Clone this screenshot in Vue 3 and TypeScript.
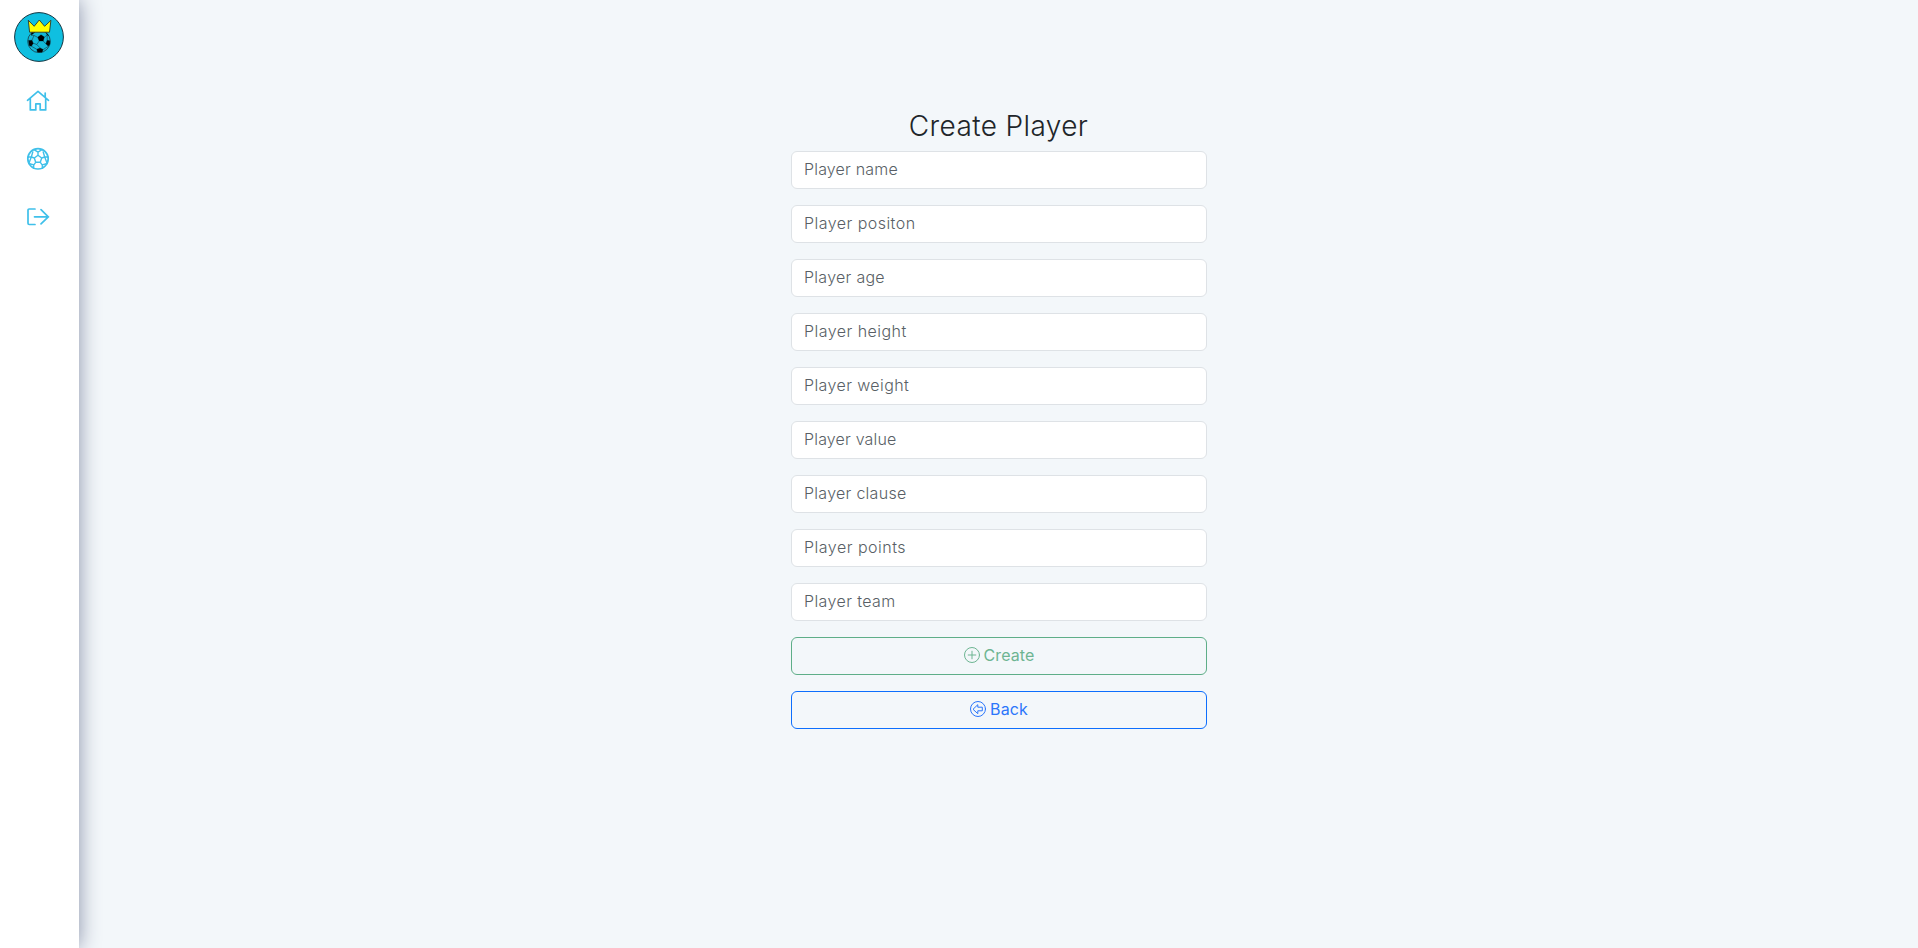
<script setup lang="ts">
interface Field { key: string; label: string }
const fields: Field[] = ['name', 'positon', 'age', 'height', 'weight', 'value', 'clause', 'points', 'team']
  .map((key) => ({ key, label: `Player ${key}` }))
</script>

<template>
  <div class="layout">
    <aside class="sidebar">
      <svg class="logo" viewBox="0 0 50 50">
        <circle cx="25" cy="25" r="24.4" fill="#0fbfe0" stroke="#153440" stroke-width="1" />
        <circle cx="25" cy="29.300" r="11.300" fill="#12b8d8" stroke="#1a3a44" stroke-width=".8" />
        <g fill="#000" stroke="#000" stroke-width=".3">
          <path d="M27 22.800l3.400 2.300-1.200 3.900h-4l-1.500-3.700z" />
          <path d="M14.500 28.500l3.500-.3 1.200 3-1.700 3.100-2.200-.6z" />
          <path d="M33.200 28.200l2.600.6.2 3.200-1.700 2.300-2.500-2.500z" />
          <path d="M22.800 37.300l3.400-1.300 3 1.600-1.200 2.700-4.600-.2z" />
          <path d="M17.500 20.800l3.500-.6-3.800 3zM32 20.800l2.700 2.700-1.500-.4z" />
        </g>
        <g fill="none" stroke="#143a44" stroke-width=".6">
          <path d="M23.700 25.300L20 23.500m5.200 5.500l-2.400 3.500-3.600-1.300m10-2.200l2.600 2.800M30.400 25.100l2.800-2M17.500 34.300l5.300 3M26.200 36l-3.400-3.500M29.200 37.600l5.100-3.300M18 28.200l2-4.700-2.800-.3M33.200 28.200v-5.100" />
        </g>
        <path d="M15.600 20.200L14.300 8.300l5.900 6L25.300 8l5.300 6.300 6.300-6-1.400 11.900z" fill="#ff0" stroke="#222" stroke-width=".8" />
      </svg>
      <nav class="nav">
        <svg viewBox="0 0 24 24" class="icon">
          <path d="M1.500 11.300L12 2.400l10.500 8.900M4.300 9.400v11.500h5.500v-6h4.400v6h5.500V9.400M19.200 4.100v4" />
        </svg>
        <svg viewBox="0 0 24 24" class="icon">
          <circle cx="12" cy="11.800" r="10.200" />
          <path class="seams" d="M12 8.300l3.700 2.700-1.400 4.300H9.700L8.300 11zM12 8.300V5.200M15.700 11l3-1M14.300 15.300l1.900 2.600M9.700 15.300l-1.900 2.600M8.300 11l-3-1M8 2.700l4 2.500 4-2.500M21.900 10l-3.200 0-1.500-5M5.300 10l-3.200 0M5.300 10l1.500-5M2.800 16.500l5 1.400-.3 3.400M5.300 10l-2.500 6.500M21.200 16.500l-5 1.400.3 3.400M18.700 10l2.500 6.500" />
        </svg>
        <svg viewBox="0 0 24 24" class="icon">
          <path d="M9 4H3.200Q2 4 2 5.200v13.100q0 1.200 1.200 1.200H9M8.500 11.800h14M15 4.700l7.300 7.100-7.300 7.100" />
        </svg>
      </nav>
    </aside>

    <main class="content">
      <form class="form" @submit.prevent>
        <h3 class="title">Create Player</h3>
        <input v-for="f in fields" :key="f.key" :class="['field', f.key]" type="text" :placeholder="f.label" />
        <button class="btn create" type="submit">
          <svg viewBox="0 0 16 16" class="glyph">
            <circle cx="8" cy="8" r="7.500" /><path d="M8 4.200v7.600M4.200 8h7.600" />
          </svg>
          <span>Create</span>
        </button>
        <button class="btn back" type="button">
          <svg viewBox="0 0 16 16" class="glyph">
            <circle cx="8" cy="8" r="7.500" /><path d="M3.300 8l4.500-4.300v2.500h4.500v3.600H7.800v2.500z" />
          </svg>
          <span>Back</span>
        </button>
      </form>
    </main>
  </div>
</template>

<style>
body { margin: 0; background: #f3f7fa; }
</style>

<style scoped>
.layout { display: flex; height: 100vh; overflow: hidden; background: #f3f7fa; font-family: Inter, "Liberation Sans", sans-serif; }
.sidebar { box-sizing: border-box; width: 79px; flex: none; padding: 12px 15px 0 14px; background: #fff; box-shadow: 0 0 20px #8890a8; display: flex; flex-direction: column; }
.logo { width: 50px; height: 50px; }
.nav { display: flex; flex-direction: column; gap: 34px; margin: 27px 0 0 12px; }
.icon { width: 24px; height: 24px; fill: none; stroke: #3fc0ea; stroke-width: 1.700; stroke-linecap: round; stroke-linejoin: round; }
.seams { stroke-width: 1.400; }
.content { flex: 1; display: flex; justify-content: center; align-items: flex-start; padding-top: 109px; }
.form { width: 416px; display: flex; flex-direction: column; gap: 16px; }
.title { margin: 0 0 -8px; font-size: 28px; line-height: 34px; font-weight: 350; text-align: center; color: #212529; letter-spacing: .38px; }
.field { box-sizing: border-box; height: 38px; padding: 5px 12px 7px 12.5px; border: 1px solid #dee2e6; border-radius: 6px; background: #fff; font: 350 16px/24px Inter, "Liberation Sans", sans-serif; color: #212529; outline: none; }
.field::placeholder { color: #595f66; opacity: 1; }
.name, .value { letter-spacing: .18px; }
.positon, .height { letter-spacing: .46px; }
.points { letter-spacing: .5px; }
.age, .clause { letter-spacing: .28px; }
.weight, .team { letter-spacing: .4px; }
.btn { box-sizing: border-box; height: 38px; padding: 0 0 2px 1px; display: flex; align-items: center; justify-content: center; gap: 4px; border: 1px solid currentColor; border-radius: 6px; background: transparent; font: 400 16px/24px Inter, "Liberation Sans", sans-serif; letter-spacing: .1px; }
.create { color: #6db592; border-color: #5eae88; }
.back { color: #2b76fb; border-color: #0d6efd; }
.glyph { width: 16px; height: 16px; fill: none; stroke: currentColor; stroke-width: 1; stroke-linecap: round; stroke-linejoin: round; }
</style>
